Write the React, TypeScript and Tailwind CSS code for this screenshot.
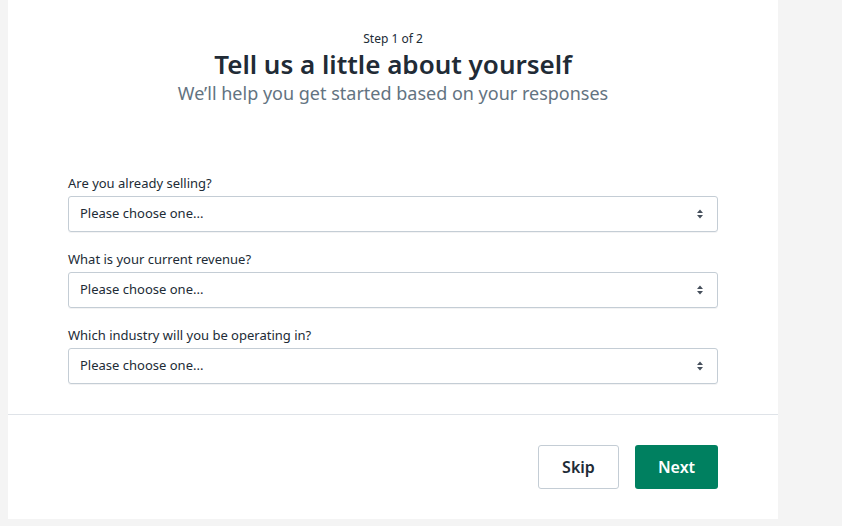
const questions = [
  'Are you already selling?',
  'What is your current revenue?',
  'Which industry will you be operating in?',
]

function SelectArrows() {
  return (
    <svg width="8" height="12" viewBox="0 0 8 12" className="text-[#454f5b]">
      <path d="M4 1.5 L7 5 H1 Z" fill="currentColor" />
      <path d="M4 10.5 L1 7 H7 Z" fill="currentColor" />
    </svg>
  )
}

export default function App() {
  return (
    <div className="w-[842px] h-[526px] bg-[#f4f4f4] pl-2 font-['Noto_Sans',sans-serif] text-[#212b36]">
      <div className="w-[770px] h-[519px] bg-white flex flex-col">
        <div className="flex flex-col items-center pt-[31px]">
          <p className="text-[12px] leading-[16px]">Step 1 of 2</p>
          <h1 className="text-[26px] leading-[32px] font-semibold mt-[1px]">Tell us a little about yourself</h1>
          <p className="text-[18px] leading-[26px] text-[#637381]">We’ll help you get started based on your responses</p>
        </div>

        <div className="px-[60px] pt-[68px] flex flex-col gap-[18px]">
          {questions.map((q) => (
            <div key={q} className="flex flex-col gap-[4px]">
              <label className="text-[13px] leading-[18px]">{q}</label>
              <div className="h-[36px] border border-[#c4cdd5] rounded-[3px] flex items-center justify-between pl-[11px] pr-[13px] shadow-[0_1px_0_rgba(22,29,37,0.05)]">
                <span className="text-[13px]">Please choose one...</span>
                <SelectArrows />
              </div>
            </div>
          ))}
        </div>

        <div className="mt-[30px] border-t border-[#dfe3e8]" />

        <div className="flex justify-end gap-[16px] pr-[60px] pt-[30px]">
          <button className="w-[81px] h-[44px] border border-[#c4cdd5] rounded-[3px] bg-white text-[16px] font-semibold text-[#212b36]">
            Skip
          </button>
          <button className="w-[83px] h-[44px] rounded-[3px] bg-[#008060] text-[16px] font-semibold text-white">
            Next
          </button>
        </div>
      </div>
    </div>
  )
}
